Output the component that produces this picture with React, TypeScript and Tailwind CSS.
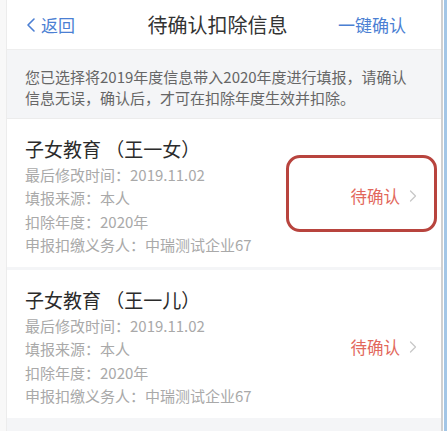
import { ChevronLeft, ChevronRight } from "lucide-react";

const cards = [
	{ name: "子女教育 （王一女）", marked: true },
	{ name: "子女教育 （王一儿）", marked: false },
];

function DeductionCard({ name, marked }: { name: string; marked: boolean }) {
	return (
		<div className="relative flex items-center bg-white pl-[18px] pr-[18px] pt-[6px] h-[148px]">
			<div className="flex-1">
				<div className="text-[19px] leading-[26px] text-[#2b2b2b]">{name}</div>
				<div className="text-[15px] leading-[23.5px] text-[#a9a9a9] mt-[1px]">
					<div>最后修改时间：2019.11.02</div>
					<div>填报来源：本人</div>
					<div>扣除年度：2020年</div>
					<div>申报扣缴义务人：中瑞测试企业67</div>
				</div>
			</div>
			<div className="flex items-center gap-[3px]">
				<span className="text-[16.5px] text-[#e2685c]">待确认</span>
				<ChevronRight size={20} strokeWidth={1.5} className="text-[#c8c8c8]" />
			</div>
			{/* annotation box drawn over the screenshot */}
			{marked && (
				<div className="absolute left-[279px] top-[36px] w-[151px] h-[77px] rounded-[14px] border-[3px] border-[#b8443e]" />
			)}
		</div>
	);
}

export default function App() {
	return (
		<div
			className="flex w-[447px] h-[431px] bg-[#f4f5f7] overflow-hidden"
			style={{ fontFamily: '"Noto Sans CJK SC", "Noto Sans", sans-serif' }}
		>
			<div className="w-[7px] bg-[#f8f8f8] border-r border-[#ececec]" />

			<div className="flex-1 flex flex-col">
				<header className="flex items-center justify-between h-[50px] bg-white pl-[12px] pr-[35px] border-b border-[#eeeeee]">
					<div className="flex items-center text-[17px] text-[#4b7fd3] w-[80px]">
						<ChevronLeft size={24} strokeWidth={1.6} className="-mr-[2px]" />
						<span>返回</span>
					</div>
					<h1 className="text-[20px] text-[#333333] ml-[10px]">待确认扣除信息</h1>
					<div className="text-[17px] text-[#4b7fd3] w-[80px] text-right">一键确认</div>
				</header>

				<div className="px-[18px] pt-[16px] pb-[10px] text-[15px] leading-[21px] text-[#666666] border-b border-[#ececec]">
					您已选择将2019年度信息带入2020年度进行填报，请确认
					<br />
					信息无误，确认后，才可在扣除年度生效并扣除。
				</div>

				<div className="flex flex-col gap-[3px]">
					{cards.map((c) => (
						<DeductionCard key={c.name} name={c.name} marked={c.marked} />
					))}
				</div>
			</div>

			<div className="w-[2px] bg-[#d0d0d0]" />
			<div className="w-[1px] bg-white" />
			<div className="w-[3px] bg-[#a3c6e6]" />
		</div>
	);
}
